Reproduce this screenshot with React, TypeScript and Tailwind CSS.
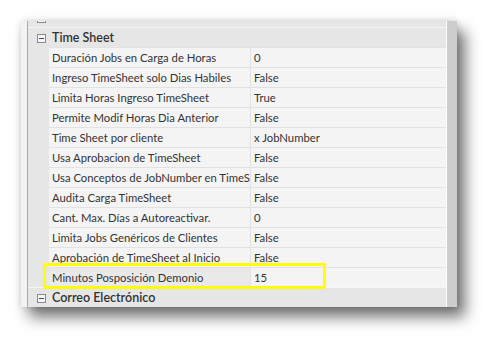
import React from "react";

const rows: { label: string; value: string; selected?: boolean }[] = [
  { label: "Duración Jobs en Carga de Horas", value: "0" },
  { label: "Ingreso TimeSheet solo Dias Habiles", value: "False" },
  { label: "Limita Horas Ingreso TimeSheet", value: "True" },
  { label: "Permite Modif Horas Dia Anterior", value: "False" },
  { label: "Time Sheet por cliente", value: "x JobNumber" },
  { label: "Usa Aprobacion de TimeSheet", value: "False" },
  { label: "Usa Conceptos de JobNumber en TimeSheet", value: "False" },
  { label: "Audita Carga TimeSheet", value: "False" },
  { label: "Cant. Max. Días a Autoreactivar.", value: "0" },
  { label: "Limita Jobs Genéricos de Clientes", value: "False" },
  { label: "Aprobación de TimeSheet al Inicio", value: "False" },
  { label: "Minutos Posposición Demonio", value: "15", selected: true },
];

function MinusBox() {
  return (
    <div className="w-[9px] h-[9px] border border-[#8a8a8a] bg-[#f6f6f6] flex items-center justify-center">
      <div className="w-[5px] h-px bg-[#2f4f7f]" />
    </div>
  );
}

function Header({ title, className = "" }: { title: string; className?: string }) {
  return (
    <div className={`flex h-[20px] shrink-0 border-t border-[#f7f7f7] bg-[#e6e6e6] ${className}`}>
      <div className="w-[21px] shrink-0 flex pt-[6px] pl-[9px]">
        <MinusBox />
      </div>
      <div className="pl-[3px] text-[12.5px] leading-[19px] font-semibold text-[#333]">{title}</div>
    </div>
  );
}

export default function App() {
  return (
    <div className="w-[499px] h-[349px] bg-white pt-[21px] pl-[21px]" style={{ fontFamily: 'Lato, "Liberation Sans", Arial, sans-serif' }}>
      <div className="relative w-[436px] h-[286px] flex overflow-hidden shadow-[8px_10px_14px_rgba(0,0,0,0.55),0_0_7px_rgba(0,0,0,0.15)]">
        <div className="w-[6px] shrink-0 bg-[#f3f3f3]" />
        <div className="w-px shrink-0 bg-[#a9a9a9]" />
        <div className="flex-1 bg-[#e6e6e6] flex flex-col overflow-hidden">
          <Header title="" className="-mt-[14px]" />
          <Header title="Time Sheet" />
          {rows.map((r) => (
            <div key={r.label} className="flex h-[20px] shrink-0">
              <div className="w-[21px] shrink-0" />
              <div
                className={`w-[201px] shrink-0 border-t border-[#e2e2e2] pl-[3px] text-[11.3px] leading-[19px] text-[#333] whitespace-nowrap overflow-hidden ${
                  r.selected ? "bg-[#e9e9e9]" : "bg-[#f4f4f4]"
                }`}
              >
                {r.label}
              </div>
              <div className="w-px shrink-0 bg-[#e2e2e2]" />
              <div className="flex-1 border-t border-[#e2e2e2] bg-[#f4f4f4] pl-[3px] text-[11.3px] leading-[19px] text-[#333] whitespace-nowrap overflow-hidden">
                {r.value}
              </div>
            </div>
          ))}
          <Header title="Correo Electrónico" />
        </div>
        <div className="w-px shrink-0 bg-white" />
        <div className="w-[10px] shrink-0 bg-[#cdcdcd]" />
        <div className="absolute left-[22px] top-[242px] w-[283px] h-[26px] border-[3px] border-[#ffff00]" />
      </div>
    </div>
  );
}
